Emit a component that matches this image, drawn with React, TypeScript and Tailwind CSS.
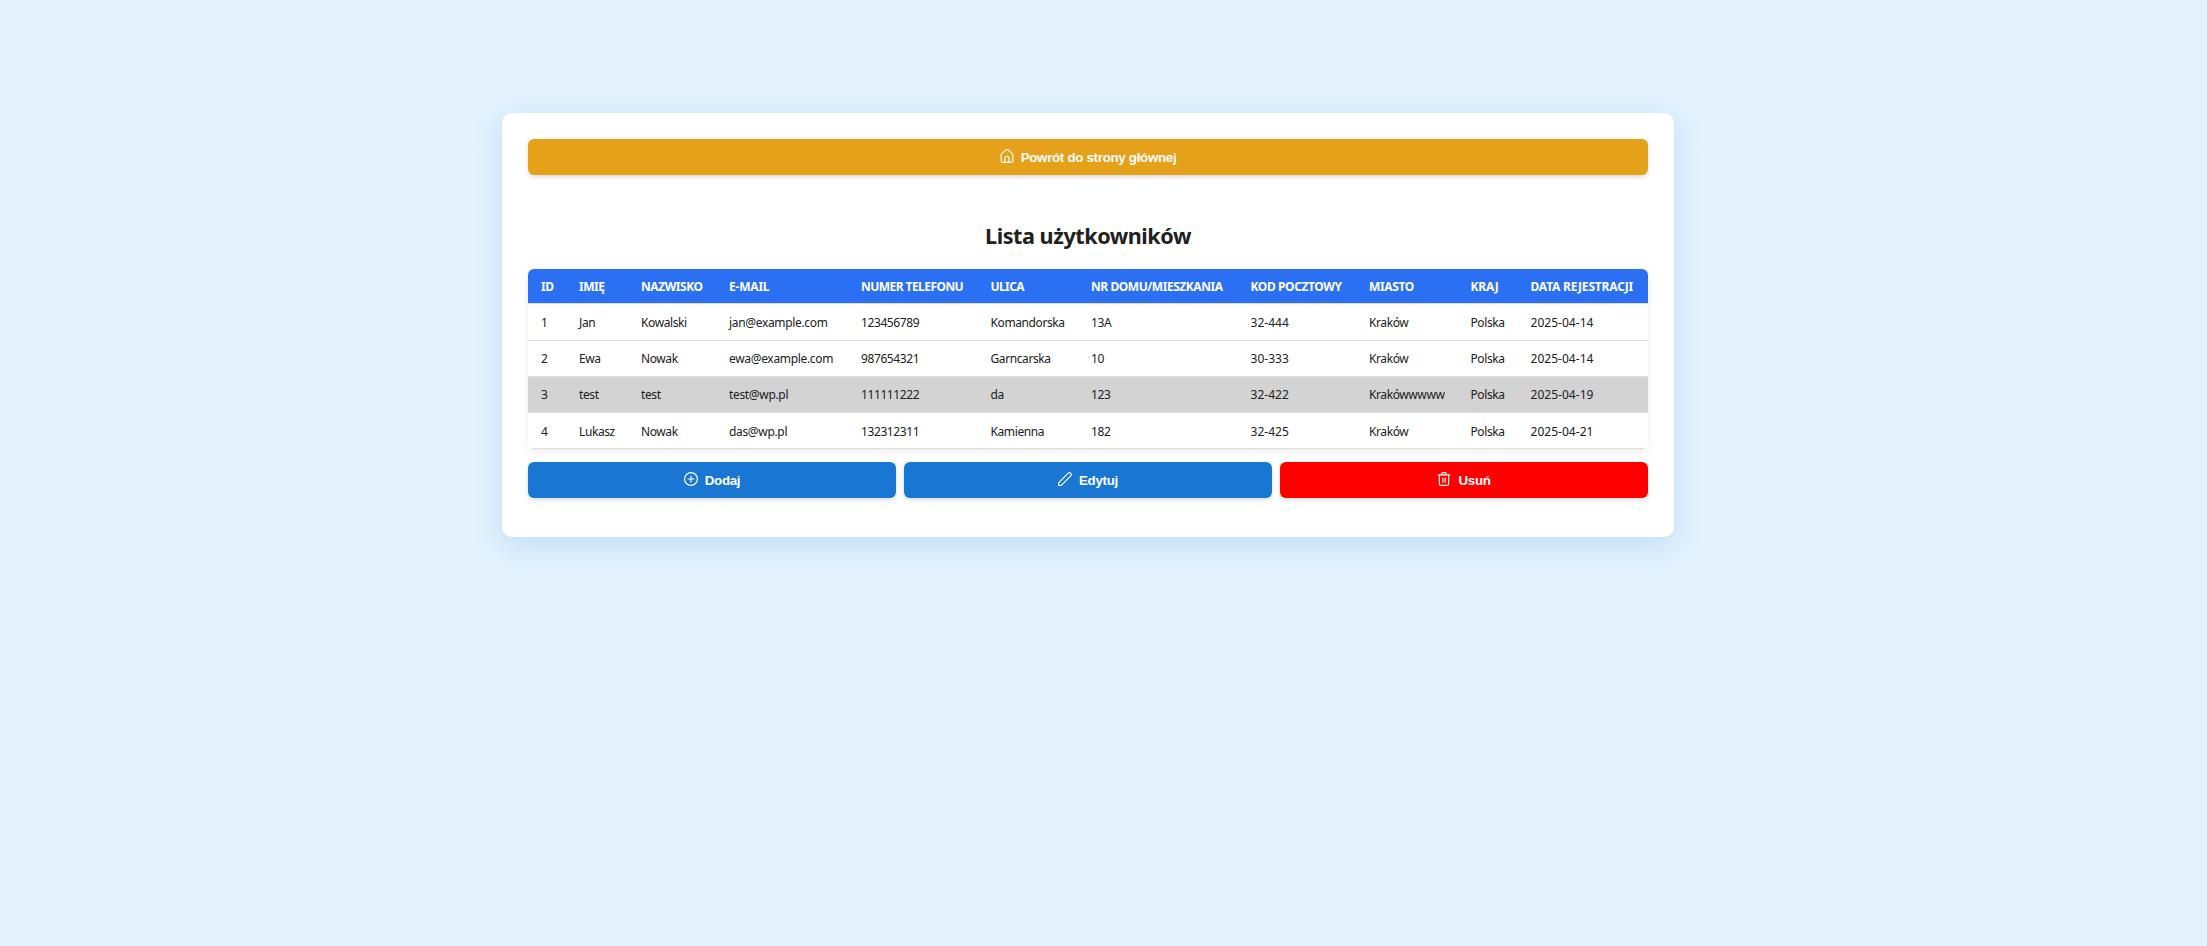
import type { ReactNode } from "react";

const columns = [
  { label: "ID", style: "w-[38px] tracking-[-0.3px]" },
  { label: "IMIĘ", style: "w-[62px] tracking-[-0.5px]" },
  { label: "NAZWISKO", style: "w-[88px] tracking-[-0.45px]" },
  { label: "E-MAIL", style: "w-[132px] tracking-[-0.2px]" },
  { label: "NUMER TELEFONU", style: "w-[129.5px] tracking-[-0.55px]" },
  { label: "ULICA", style: "w-[100.5px] tracking-[-0.6px]" },
  { label: "NR DOMU/MIESZKANIA", style: "w-[159.5px] tracking-[-0.45px]" },
  { label: "KOD POCZTOWY", style: "w-[118.5px] tracking-[-0.4px]" },
  { label: "MIASTO", style: "w-[101.5px] tracking-[-0.35px]" },
  { label: "KRAJ", style: "w-[60px] tracking-[-0.2px]" },
  { label: "DATA REJESTRACJI", style: "w-[130.5px] tracking-[-0.18px]" },
];

const users = [
  ["1", "Jan", "Kowalski", "jan@example.com", "123456789", "Komandorska", "13A", "32-444", "Kraków", "Polska", "2025-04-14"],
  ["2", "Ewa", "Nowak", "ewa@example.com", "987654321", "Garncarska", "10", "30-333", "Kraków", "Polska", "2025-04-14"],
  ["3", "test", "test", "test@wp.pl", "111111222", "da", "123", "32-422", "Krakówwwww", "Polska", "2025-04-19"],
  ["4", "Lukasz", "Nowak", "das@wp.pl", "132312311", "Kamienna", "182", "32-425", "Kraków", "Polska", "2025-04-21"],
];

function cellTracking(value: string) {
  if (value.includes("-")) return "tracking-[0.03px]";
  if (value.includes("@")) return "tracking-[-0.33px]";
  return "tracking-[-0.4px]";
}

function Icon({ children }: { children: ReactNode }) {
  return (
    <svg viewBox="0 0 24 24" className="-mt-[3px] size-[14px] shrink-0" fill="none" stroke="currentColor" strokeWidth="2" strokeLinecap="round" strokeLinejoin="round">
      {children}
    </svg>
  );
}

function ActionButton({ color, icon, label }: { color: string; icon: ReactNode; label: string }) {
  return (
    <button className={`flex h-9 flex-1 items-center justify-center gap-[7px] rounded-md text-[13.333px] font-bold tracking-[-0.3px] text-white shadow-[0_2px_5px_rgba(0,0,0,0.15)] ${color}`}>
      <Icon>{icon}</Icon>
      <span className="mt-0.5">{label}</span>
    </button>
  );
}

export default function App() {
  return (
    <div className="min-h-screen bg-[#e3f2fd] pt-[113px] pr-[31px] font-['Liberation_Sans',Arial,sans-serif] text-[#212121]">
      <main className="mx-auto flex h-[424px] w-[1172px] flex-col rounded-[10px] bg-white p-[26px] shadow-[0_8px_30px_rgba(25,118,210,0.17)]">
        <div className="flex">
          <ActionButton
            color="bg-[#e6a11b]"
            label="Powrót do strony głównej"
            icon={
              <>
                <path d="M2 10.500a4 4 0 0 1 1.300-2.900L9.500 2a4 4 0 0 1 5 0l6.200 5.600A4 4 0 0 1 22 10.500V20a3 3 0 0 1-3 3H5a3 3 0 0 1-3-3z" />
                <path d="M8.500 23v-7a3.500 3.500 0 0 1 7 0v7" />
              </>
            }
          />
        </div>
        <h1 className="mt-[46px] h-[30px] text-center font-['Noto_Sans',sans-serif] text-[21.6px] leading-[30px] font-bold tracking-[-0.45px]">Lista użytkowników</h1>
        <table className="mt-[18px] w-full shrink-0 table-fixed border-separate border-spacing-0 overflow-hidden rounded-md font-['Noto_Sans',sans-serif] text-[12px] leading-4 shadow-[0_2px_10px_rgba(0,0,0,0.08)]">
          <thead>
            <tr className="h-[35px] bg-[#2b70f3] text-left text-white">
              {columns.map((c) => (
                <th key={c.label} className={`border-b border-[#dedede] pt-0.5 pr-0 pb-0 pl-[13px] whitespace-nowrap ${c.style}`}>{c.label}</th>
              ))}
            </tr>
          </thead>
          <tbody className="[&>tr:first-child]:h-[37px] [&>tr:last-child>td]:pt-0.5">
            {users.map((u) => (
              <tr key={u[0]} className={u[0] === "3" ? "h-9 bg-[#d3d3d3]" : "h-9 bg-white"}>
                {u.map((v, i) => (
                  <td key={i} className={`border-b border-[#dedede] pt-px pr-0 pb-0 pl-[13px] whitespace-nowrap ${cellTracking(v)}`}>{v}</td>
                ))}
              </tr>
            ))}
          </tbody>
        </table>
        <div className="mt-[13px] flex gap-2">
          <ActionButton color="bg-[#1976d2]" label="Dodaj" icon={<><circle cx="12" cy="12" r="11" /><path d="M12 7v10M7 12h10" /></>} />
          <ActionButton color="bg-[#1976d2]" label="Edytuj" icon={<path d="M1 23v-4.500L17.500 2a3.200 3.200 0 0 1 4.500 4.500L5.500 23z" />} />
          <ActionButton color="bg-[#ff0000]" label="Usuń" icon={<path d="M2 5h20M8 5V3a2 2 0 0 1 2-2h4a2 2 0 0 1 2 2v2M4 5v15a3 3 0 0 0 3 3h10a3 3 0 0 0 3-3V5M10 10.500v7M14 10.500v7" />} />
        </div>
      </main>
    </div>
  );
}
